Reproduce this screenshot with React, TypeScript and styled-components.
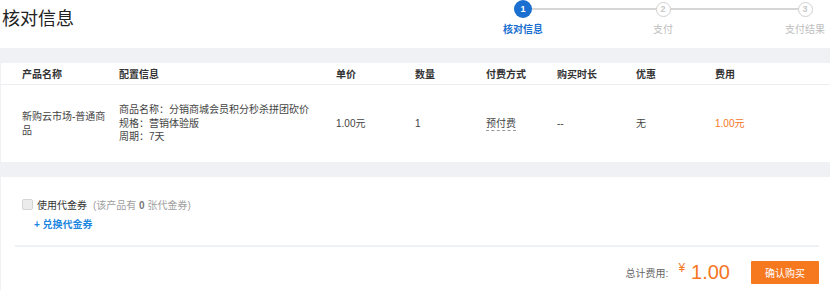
import { FC } from "react";
import styled, { createGlobalStyle } from "styled-components";

const GlobalStyle = createGlobalStyle`
  html, body {
    margin: 0;
    padding: 0;
    background: #eff1f5;
  }
  body {
    font-family: "Liberation Sans", "Noto Sans CJK SC", sans-serif;
    color: #333;
  }
`;

const ORANGE = "#f5761f";
const BLUE = "#1a6fd0";

const Page = styled.div`
  display: flex;
  flex-direction: column;
  min-height: 290px;
`;

const Header = styled.div`
  display: flex;
  justify-content: space-between;
  align-items: flex-start;
  height: 48px;
  background: #fff;
  padding-left: 2px;
`;

const Title = styled.h1`
  margin: 7px 0 0;
  font-size: 18px;
  line-height: 24px;
  font-weight: normal;
  color: #222;
`;

const Steps = styled.div`
  position: relative;
  display: flex;

  &::before {
    content: "";
    position: absolute;
    left: 25px;
    right: 25px;
    top: 8px;
    height: 2px;
    background: #d6d6d6;
  }
`;

const Step = styled.div<{ $gap?: number }>`
  position: relative;
  display: flex;
  flex-direction: column;
  align-items: center;
  width: 50px;
  margin-left: ${(p) => p.$gap ?? 0}px;
`;

const Circle = styled.div<{ $active?: boolean }>`
  box-sizing: border-box;
  width: ${(p) => (p.$active ? 18 : 15)}px;
  height: ${(p) => (p.$active ? 18 : 15)}px;
  margin-top: ${(p) => (p.$active ? 0 : 1.5)}px;
  margin-bottom: ${(p) => (p.$active ? 6 : 7.5)}px;
  border-radius: 50%;
  display: flex;
  align-items: center;
  justify-content: center;
  font-size: 9px;
  font-weight: bold;
  background: ${(p) => (p.$active ? BLUE : "#fff")};
  color: ${(p) => (p.$active ? "#fff" : "#c8c8c8")};
  border: ${(p) => (p.$active ? "none" : "1px solid #d0d0d0")};
`;

const StepLabel = styled.div<{ $active?: boolean }>`
  font-size: 10px;
  line-height: 12px;
  white-space: nowrap;
  font-weight: ${(p) => (p.$active ? "bold" : "normal")};
  color: ${(p) => (p.$active ? BLUE : "#bdbdbd")};
`;

const Main = styled.div`
  flex: 1;
  display: flex;
  flex-direction: column;
  gap: 15px;
  padding: 15px 0 0 1px;
`;

const Card = styled.div<{ $grow?: boolean }>`
  background: #fff;
  flex: ${(p) => (p.$grow ? 1 : "none")};
`;

const COLS = "97px 217px 79px 71px 71px 79px 79px 1fr";

const HeadRow = styled.div`
  display: grid;
  grid-template-columns: ${COLS};
  align-items: center;
  height: 21px;
  padding: 0 21px;
  border-bottom: 1px solid #eceef2;
  font-size: 10px;
  font-weight: bold;
  color: #333;
`;

const BodyRow = styled.div`
  display: grid;
  grid-template-columns: ${COLS};
  align-items: center;
  height: 77px;
  padding: 0 21px;
  font-size: 10px;
  line-height: 13.5px;
  color: #444;
`;

const Cell = styled.div<{ $orange?: boolean }>`
  padding-right: 10px;
  color: ${(p) => (p.$orange ? ORANGE : "inherit")};
`;

const Dotted = styled.span`
  border-bottom: 1px dashed #999;
  padding-bottom: 1px;
`;

const CouponArea = styled.div`
  display: flex;
  flex-direction: column;
  padding: 20px 11px 0 14px;
`;

const CheckRow = styled.label`
  display: flex;
  align-items: center;
  height: 14px;
  margin-left: 7px;
  font-size: 10px;
`;

const Box = styled.span`
  box-sizing: border-box;
  width: 11px;
  height: 11px;
  border: 1px solid #d4d4d4;
  border-radius: 2px;
  background: #ececec;
  margin-right: 4px;
`;

const Hint = styled.span`
  color: #a0a0a0;
  margin-left: 6px;

  b {
    color: #777;
  }
`;

const ExchangeLink = styled.a`
  display: block;
  margin: 7px 0 0 19px;
  height: 14px;
  line-height: 14px;
  font-size: 10px;
  font-weight: bold;
  color: #1e87e0;
  text-decoration: none;
`;

const Divider = styled.div`
  height: 2px;
  background: #eef1f6;
  margin-top: 13px;
`;

const TotalRow = styled.div`
  display: flex;
  justify-content: flex-end;
  align-items: center;
  margin-top: 14px;
`;

const TotalLabel = styled.span`
  font-size: 10px;
  color: #666;
  margin-right: 10px;
`;

const Yen = styled.span`
  font-size: 12px;
  color: ${ORANGE};
  align-self: flex-start;
  margin-top: 0;
  margin-right: 6px;
`;

const Amount = styled.span`
  font-size: 20px;
  color: ${ORANGE};
  margin-right: 21px;
`;

const ConfirmButton = styled.button`
  width: 68px;
  height: 23px;
  border: none;
  border-radius: 1px;
  background: #f6781f;
  color: #fff;
  font-family: inherit;
  font-size: 10px;
  cursor: pointer;
`;

const steps = [
  { n: 1, label: "核对信息", gap: 0 },
  { n: 2, label: "支付", gap: 90 },
  { n: 3, label: "支付结果", gap: 92 },
];

const App: FC = () => {
  return (
    <Page>
      <GlobalStyle />
      <Header>
        <Title>核对信息</Title>
        <Steps>
          {steps.map((s) => (
            <Step key={s.n} $gap={s.gap}>
              <Circle $active={s.n === 1}>{s.n}</Circle>
              <StepLabel $active={s.n === 1}>{s.label}</StepLabel>
            </Step>
          ))}
        </Steps>
      </Header>
      <Main>
        <Card>
          <HeadRow>
            <Cell>产品名称</Cell>
            <Cell>配置信息</Cell>
            <Cell>单价</Cell>
            <Cell>数量</Cell>
            <Cell>付费方式</Cell>
            <Cell>购买时长</Cell>
            <Cell>优惠</Cell>
            <Cell>费用</Cell>
          </HeadRow>
          <BodyRow>
            <Cell>新购云市场-普通商品</Cell>
            <Cell>
              商品名称：分销商城会员积分秒杀拼团砍价
              <br />
              规格：营销体验版
              <br />
              周期：7天
            </Cell>
            <Cell>1.00元</Cell>
            <Cell>1</Cell>
            <Cell>
              <Dotted>预付费</Dotted>
            </Cell>
            <Cell>--</Cell>
            <Cell>无</Cell>
            <Cell $orange>1.00元</Cell>
          </BodyRow>
        </Card>
        <Card $grow>
          <CouponArea>
            <CheckRow>
              <Box />
              使用代金券
              <Hint>
                (该产品有 <b>0</b> 张代金券)
              </Hint>
            </CheckRow>
            <ExchangeLink href="#">+ 兑换代金券</ExchangeLink>
            <Divider />
            <TotalRow>
              <TotalLabel>总计费用:</TotalLabel>
              <Yen>¥</Yen>
              <Amount>1.00</Amount>
              <ConfirmButton>确认购买</ConfirmButton>
            </TotalRow>
          </CouponArea>
        </Card>
      </Main>
    </Page>
  );
};

export default App;
